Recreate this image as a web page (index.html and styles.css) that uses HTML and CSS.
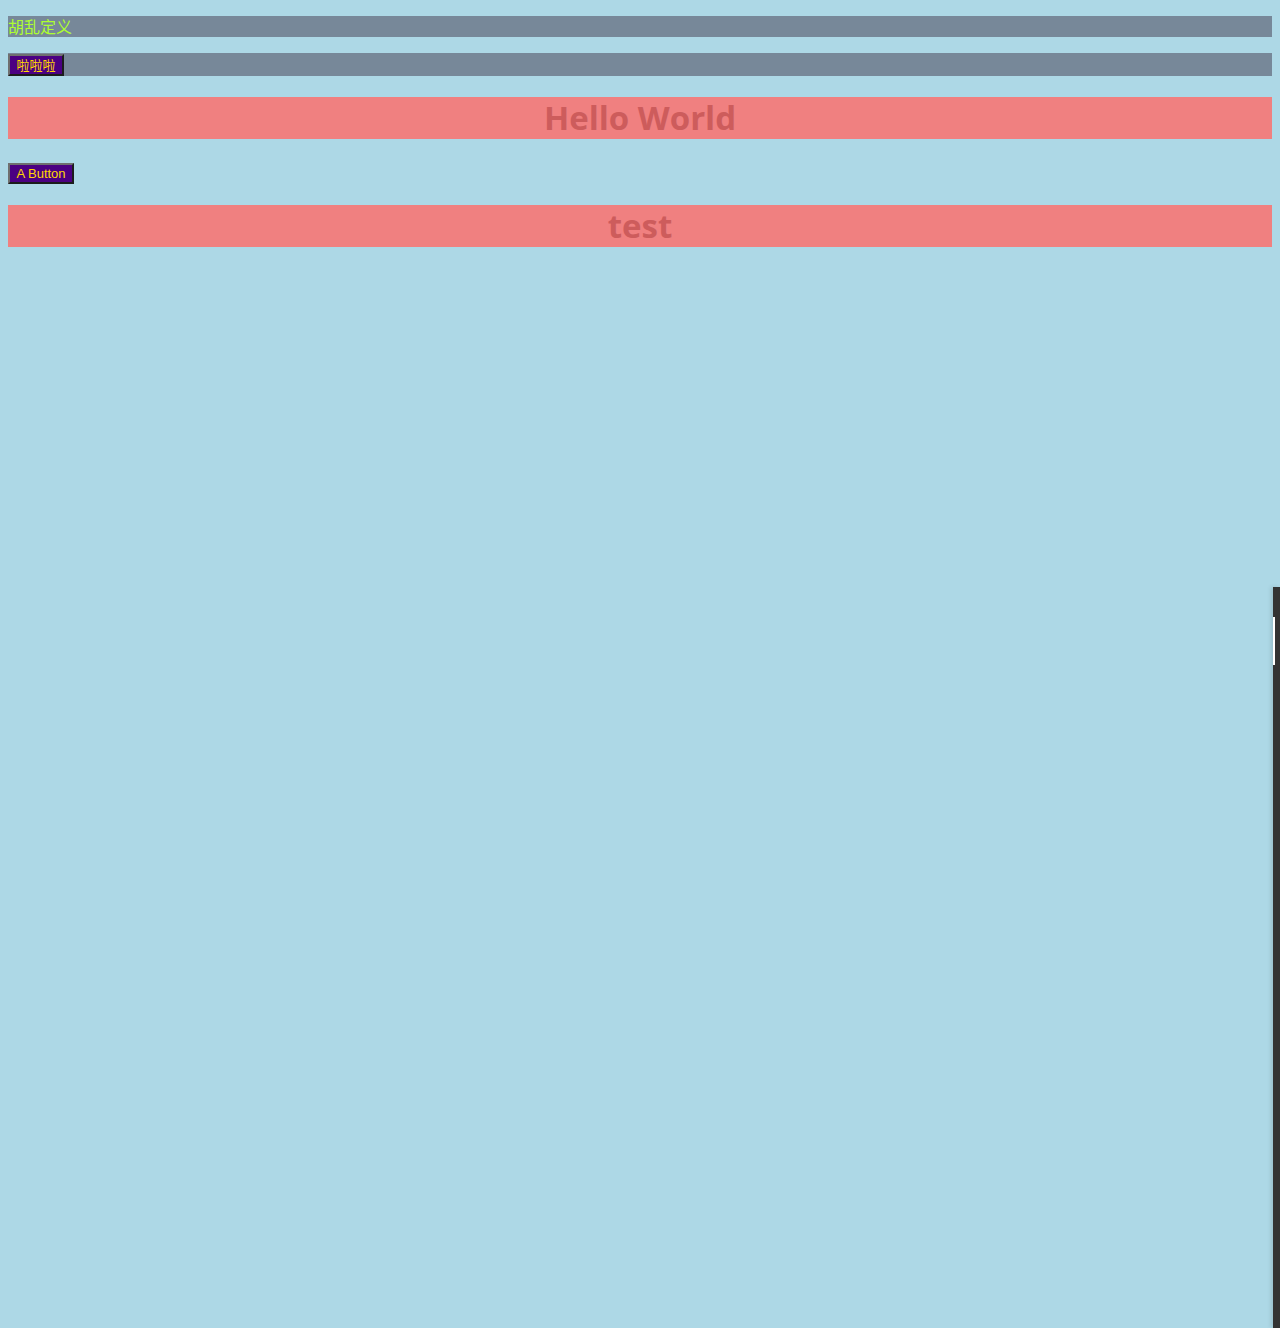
FILE: index.html
```html
<!DOCTYPE html>
<html lang="zh">
<head>
<meta charset="utf-8">
<title>Demo</title>
<link rel="stylesheet" href="styles.css">
</head>
<body>
<div class="page">
  <div class="bar bar-text">胡乱定义</div>
  <div class="bar bar-btn"><button class="btn btn-cn">啦啦啦</button></div>
  <h1 class="banner">Hello World</h1>
  <div class="btn-row"><button class="btn btn-en">A Button</button></div>
  <h1 class="banner">test</h1>
</div>
<div class="scroll-edge"><div class="scroll-thumb"></div></div>
</body>
</html>
```
FILE: styles.css
```css
html, body {
  margin: 0;
  padding: 0;
  background: #add8e6;
}
body {
  font-family: "Noto Sans CJK SC", "Liberation Sans", sans-serif;
}
.page {
  padding: 16px 8px 0 8px;
  display: flex;
  flex-direction: column;
}
.bar {
  background: #778899;
}
.bar-text {
  height: 21px;
  line-height: 21px;
  font-size: 16px;
  color: #adff2f;
}
.bar-btn {
  margin-top: 16px;
  height: 23px;
  padding-top: 1px;
  box-sizing: border-box;
  display: flex;
  align-items: flex-start;
}
.btn {
  background: #4b0082;
  color: #ffd700;
  border-style: solid;
  border-width: 2px;
  border-color: #6f6f6f #1c1c1c #1c1c1c #6f6f6f;
  padding: 0;
  margin: 0;
  box-sizing: border-box;
  font-size: 13px;
  cursor: pointer;
}
.btn-cn {
  width: 56px;
  height: 22px;
  font-family: "Noto Sans CJK SC", sans-serif;
  font-size: 13px;
  line-height: 18px;
}
.btn-en {
  width: 66px;
  height: 21px;
  font-family: "Liberation Sans", Arial, sans-serif;
  line-height: 17px;
}
.banner {
  margin: 21px 0 0 0;
  height: 42px;
  line-height: 42px;
  background: #f08080;
  color: #cd5c5c;
  text-align: center;
  font-family: "Open Sans", "Noto Sans", sans-serif;
  font-weight: 700;
  font-size: 33px;
}
.btn-row {
  margin-top: 24px;
  display: flex;
}
.scroll-edge {
  position: fixed;
  right: 0;
  top: 587px;
  bottom: 0;
  width: 7px;
  background: #333333;
  box-shadow: -2px 0 4px rgba(0, 0, 0, 0.12);
}
.scroll-thumb {
  margin-top: 30px;
  width: 2px;
  height: 48px;
  background: #ffffff;
}
```
